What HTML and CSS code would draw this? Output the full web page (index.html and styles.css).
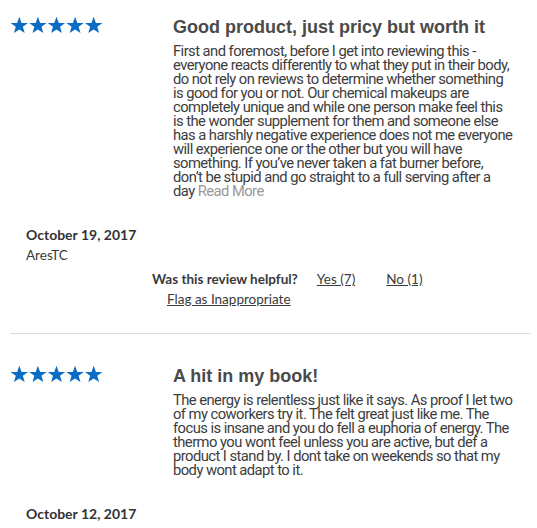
FILE: index.html
```html
<!DOCTYPE html>
<html lang="en">

<head>
    <meta charset="UTF-8">
    <meta name="viewport" content="width=device-width, initial-scale=1.0">
    <title>Reviews</title>
    <link rel="stylesheet" href="styles.css">
</head>

<body>
    <div class="reviews">
        <div class="review">
            <div class="review-top">
                <div class="stars">
                    <svg viewBox="0 0 5 1"><use href="#stars5"></use></svg>
                </div>
                <div class="review-body">
                    <h2>Good product, just pricy but worth it</h2>
                    <p>First and foremost, before I get into reviewing this - everyone reacts differently to what they put in their body, do not rely on reviews to determine whether something is good for you or not. Our chemical makeups are completely unique and while one person make feel this is the wonder supplement for them and someone else has a harshly negative experience does not me everyone will experience one or the other but you will have something. If you’ve never taken a fat burner before, don’t be stupid and go straight to a full serving after a day <a href="#" class="read-more">Read More</a></p>
                </div>
            </div>
            <div class="review-meta">
                <div class="date">October 19, 2017</div>
                <div class="author">AresTC</div>
            </div>
            <div class="helpful">
                <div class="helpful-row">
                    <span class="helpful-label">Was this review helpful?</span>
                    <a href="#" class="vote">Yes (7)</a>
                    <a href="#" class="vote">No (1)</a>
                </div>
                <a href="#" class="flag">Flag as Inappropriate</a>
            </div>
        </div>

        <div class="review">
            <div class="review-top">
                <div class="stars">
                    <svg viewBox="0 0 5 1"><use href="#stars5"></use></svg>
                </div>
                <div class="review-body">
                    <h2>A hit in my book!</h2>
                    <p>The energy is relentless just like it says. As proof I let two of my coworkers try it. The felt great just like me. The focus is insane and you do fell a euphoria of energy. The thermo you wont feel unless you are active, but def a product I stand by. I dont take on weekends so that my body wont adapt to it.</p>
                </div>
            </div>
            <div class="review-meta">
                <div class="date">October 12, 2017</div>
            </div>
        </div>
    </div>

    <svg width="0" height="0" class="defs">
        <defs>
            <path id="star" d="M0.5 0.04 L0.62 0.37 L0.97 0.37 L0.69 0.58 L0.79 0.92 L0.5 0.72 L0.21 0.92 L0.31 0.58 L0.03 0.37 L0.38 0.37 Z"></path>
            <g id="stars5" fill="#0b6cc4">
                <use href="#star"></use>
                <use href="#star" x="1"></use>
                <use href="#star" x="2"></use>
                <use href="#star" x="3"></use>
                <use href="#star" x="4"></use>
            </g>
        </defs>
    </svg>
</body>

</html>
```

FILE: styles.css
```css
body {
    margin: 0;
    font-family: Lato, "Open Sans", sans-serif;
    color: #3a3a3a;
    background: white;
}

.defs {
    position: absolute;
}

.reviews {
    padding: 0 6px 0 10px;
}

.review {
    border-bottom: 1px solid #dcdcdc;
    padding-bottom: 26px;
    margin-bottom: 15px;
}

.review-top {
    display: flex;
    padding-top: 16px;
}

.stars {
    width: 163px;
    flex-shrink: 0;
}

.stars svg {
    display: block;
    width: 93px;
    height: 18.6px;
}

.review-body {
    width: 341px;
}

.review-body h2 {
    font-family: "Liberation Sans", Arial, sans-serif;
    font-size: 18px;
    font-weight: bold;
    color: #4a4a4a;
    margin: 0 0 6px;
    line-height: 22px;
}

.review-body p {
    margin: 0;
    font-family: Roboto, sans-serif;
    font-size: 14.78px;
    letter-spacing: -0.55px;
    line-height: 14px;
    color: #3d3d3d;
}

.read-more {
    color: #999;
    text-decoration: none;
}

.review-meta {
    padding: 27px 0 0 16px;
}

.date {
    font-size: 14px;
    font-weight: bold;
    color: #333;
    line-height: 20px;
}

.author {
    font-size: 13.5px;
    margin-top: 2px;
}

.helpful {
    margin: 8px 0 0 142px;
    font-size: 13.5px;
}

.helpful-row {
    display: flex;
}

.helpful-label {
    font-weight: bold;
    margin-right: 19px;
}

.vote {
    color: #3a3a3a;
    margin-right: 31px;
}

.flag {
    display: inline-block;
    margin: 4px 0 0 15px;
    color: #3a3a3a;
}
```
